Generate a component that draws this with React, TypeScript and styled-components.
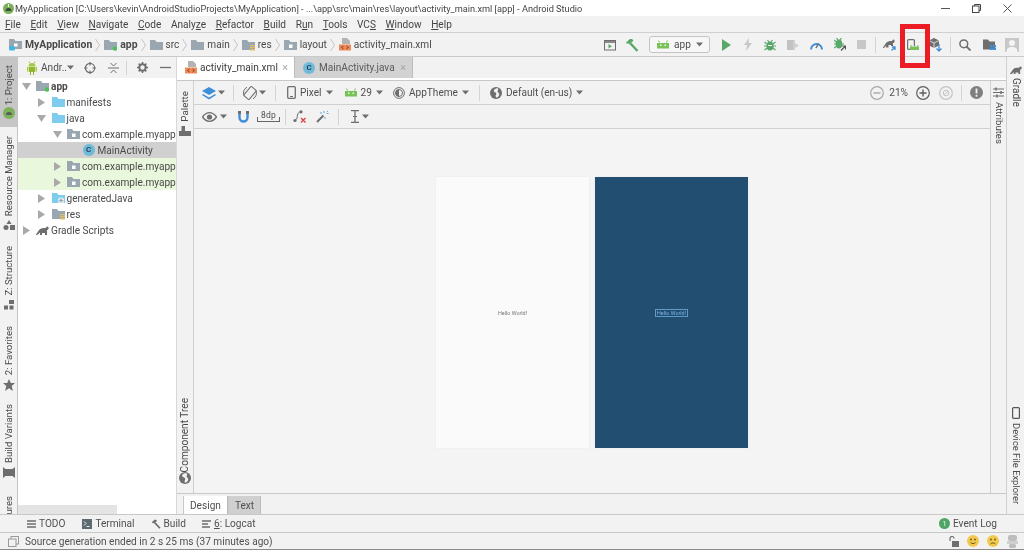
import React from "react";
import styled, { createGlobalStyle } from "styled-components";

const GlobalStyle = createGlobalStyle`
  html, body {
    margin: 0;
    padding: 0;
    background: #f2f2f2;
  }
  body {
    font-family: Roboto, "Open Sans", sans-serif;
    font-size: 10.1px;
    color: #505050;
    overflow: hidden;
  }
  * {
    box-sizing: border-box;
  }
  svg {
    display: block;
    flex: none;
  }
  u {
    text-underline-offset: 1px;
  }
`;

const Window = styled.div`
  position: relative;
  width: 1024px;
  height: 550px;
  display: flex;
  flex-direction: column;
  background: #f2f2f2;
  overflow: hidden;
  border-bottom: 1px solid #8a8a8a;
  filter: blur(0.35px);
`;

/* top of the window */
const TitleBar = styled.div`
  height: 16px;
  display: flex;
  align-items: center;
  background: #fff;
  padding-left: 3px;
  font-size: 9.2px;
  color: #444;
  white-space: nowrap;
`;

const TitleText = styled.span`
  margin-left: 1px;
`;

const WindowButtons = styled.div`
  margin-left: auto;
  display: flex;
  align-items: center;
  gap: 22px;
  padding-right: 12px;
`;

const MenuBar = styled.div`
  height: 17px;
  display: flex;
  align-items: center;
  gap: 9.6px;
  padding-left: 5px;
  border-bottom: 1px solid #d0d0d0;
  color: #444;
`;

const NavBar = styled.div`
  height: 24px;
  display: flex;
  align-items: center;
  padding-left: 9px;
  border-bottom: 1px solid #c9c9c9;
  white-space: nowrap;
`;

const Crumb = styled.div<{ $bold?: boolean }>`
  display: flex;
  align-items: center;
  gap: 3px;
  font-weight: ${(p) => (p.$bold ? 700 : 400)};
  font-size: ${(p) => (p.$bold ? "10.4px" : "inherit")};
  color: #4a4a4a;
`;

const CrumbSep = styled.div`
  width: 5px;
  height: 14px;
  margin: 0 4px 0 3px;
`;

const NavTools = styled.div`
  margin-left: auto;
  display: flex;
  align-items: center;
`;

const NavSlot = styled.div<{ $w: number }>`
  width: ${(p) => p.$w}px;
  height: 20px;
  display: flex;
  align-items: center;
  justify-content: center;
`;

const RunCombo = styled.div`
  width: 61px;
  height: 17px;
  margin: 0 5px 0 6px;
  display: flex;
  align-items: center;
  padding: 0 7px;
  gap: 5px;
  background: #f7f7f7;
  border: 1px solid #c4c4c4;
  border-radius: 3px;
`;

const VerticalLine = styled.div<{ $h?: number; $ml?: number }>`
  width: 1px;
  height: ${(p) => p.$h ?? 16}px;
  margin-left: ${(p) => p.$ml ?? 0}px;
  background: #d4d4d4;
  flex: none;
`;

/* main area */
const Body = styled.div`
  flex: 1;
  min-height: 0;
  display: flex;
`;

const SideStrip = styled.div<{ $right?: boolean }>`
  width: 18px;
  flex: none;
  display: flex;
  flex-direction: column;
  overflow: hidden;
  ${(p) => (p.$right ? "border-left: 1px solid #d0d0d0;" : "border-right: 1px solid #c4c4c4;")}
`;

const SideItem = styled.div<{ $h: number; $active?: boolean; $pad?: number; $gap?: number }>`
  height: ${(p) => p.$h}px;
  flex: none;
  display: flex;
  flex-direction: column;
  align-items: center;
  justify-content: flex-end;
  gap: ${(p) => p.$gap ?? 4}px;
  padding-bottom: ${(p) => p.$pad ?? 0}px;
  background: ${(p) => (p.$active ? "#c6c6c6" : "transparent")};
`;

const SideItemDown = styled(SideItem)`
  justify-content: flex-start;
  padding-bottom: 0;
  padding-top: ${(p) => p.$pad ?? 0}px;
`;

const VerticalUp = styled.span<{ $size?: number }>`
  writing-mode: vertical-rl;
  transform: rotate(180deg);
  font-size: ${(p) => p.$size ?? 9.6}px;
  line-height: 14px;
  color: #4a4a4a;
  white-space: nowrap;
`;

const VerticalDown = styled.span<{ $size?: number }>`
  writing-mode: vertical-rl;
  font-size: ${(p) => p.$size ?? 9.6}px;
  line-height: 14px;
  color: #4a4a4a;
  white-space: nowrap;
`;

const ProjectPanel = styled.div`
  width: 159px;
  flex: none;
  display: flex;
  flex-direction: column;
  background: #fff;
  border-right: 1px solid #d8d8d8;
`;

const PanelHeader = styled.div`
  height: 21px;
  flex: none;
  display: flex;
  align-items: center;
  padding-left: 9px;
  background: #f2f2f2;
`;

const PanelTitle = styled.span`
  margin-left: 4px;
`;

const HeaderIcon = styled.div<{ $ml: number }>`
  margin-left: ${(p) => p.$ml}px;
`;

const Tree = styled.div`
  flex: 1;
  overflow: hidden;
`;

const TreeRow = styled.div<{ $depth: number; $tone?: "selected" | "changed" }>`
  height: 16px;
  display: flex;
  align-items: center;
  gap: 2px;
  padding-left: ${(p) => 2 + p.$depth * 15.5}px;
  color: #4a4a4a;
  white-space: nowrap;
  overflow: hidden;
  background: ${(p) =>
    p.$tone === "selected" ? "#d0d0d0" : p.$tone === "changed" ? "#e9f7dc" : "transparent"};
`;

const TreeArrow = styled.div`
  width: 12px;
  display: flex;
  justify-content: center;
  margin-right: 2px;
  flex: none;
`;

const TreeLabel = styled.span<{ $bold?: boolean }>`
  font-weight: ${(p) => (p.$bold ? 700 : 400)};
`;

const ClassBadge = styled.span`
  width: 12px;
  height: 12px;
  flex: none;
  margin-right: 1px;
  border-radius: 50%;
  background: #6fbad8;
  color: #234;
  font-size: 8px;
  font-weight: 500;
  line-height: 12px;
  text-align: center;
`;

const PanelScroll = styled.div`
  height: 9px;
  width: 99px;
  flex: none;
  background: #e4e4e4;
`;

/* editor */
const Editor = styled.div`
  flex: 1;
  min-width: 0;
  display: flex;
  flex-direction: column;
`;

const EditorTabs = styled.div`
  height: 21px;
  flex: none;
  display: flex;
  border-bottom: 2px solid #fff;
  box-sizing: content-box;
`;

const EditorTab = styled.div<{ $active?: boolean }>`
  width: 118px;
  display: flex;
  align-items: center;
  gap: 3px;
  padding: 0 6px 0 8px;
  color: ${(p) => (p.$active ? "#3c3c3c" : "#5a5a5a")};
  background: ${(p) => (p.$active ? "#fff" : "#d2d2d2")};
  border-right: 1px solid #bcbcbc;
`;

const TabClose = styled.span`
  margin-left: auto;
  color: #a8a8a8;
  font-size: 11px;
`;

const EditorMain = styled.div`
  flex: 1;
  min-height: 0;
  display: flex;
  border-top: 1px solid #c8c8c8;
`;

const ToolWindowBar = styled.div`
  width: 17px;
  flex: none;
  display: flex;
  flex-direction: column;
  justify-content: space-between;
  border-right: 1px solid #d0d0d0;
`;

const AttributesBar = styled.div`
  width: 16px;
  flex: none;
  display: flex;
  flex-direction: column;
  align-items: center;
  gap: 4px;
  padding-top: 6px;
  border-left: 1px solid #d0d0d0;
`;

const DesignColumn = styled.div`
  flex: 1;
  min-width: 0;
  display: flex;
  flex-direction: column;
`;

const DesignToolbar = styled.div`
  height: 24px;
  flex: none;
  display: flex;
  align-items: center;
  border-bottom: 1px solid #d0d0d0;
  padding-right: 7px;
  white-space: nowrap;
`;

const Tool = styled.div<{ $ml?: number; $gap?: number }>`
  display: flex;
  align-items: center;
  gap: ${(p) => p.$gap ?? 2}px;
  margin-left: ${(p) => p.$ml ?? 0}px;
`;

const RightTools = styled.div`
  margin-left: auto;
  display: flex;
  align-items: center;
`;

const Canvas = styled.div`
  flex: 1;
  min-height: 0;
  display: flex;
  justify-content: center;
  align-items: center;
  gap: 6px;
  padding-top: 3px;
  background: #f4f4f4;
`;

const Phone = styled.div<{ $blueprint?: boolean }>`
  width: 153px;
  height: 271px;
  display: flex;
  align-items: center;
  justify-content: center;
  background: ${(p) => (p.$blueprint ? "#224e71" : "#fafafa")};
  box-shadow: 0 0 1px #d8d8d8;
`;

const HelloText = styled.span`
  font-size: 5.4px;
  color: #777;
`;

const HelloBlueprint = styled.span`
  font-size: 5.4px;
  line-height: 6px;
  padding: 0 1px;
  color: #7eb2de;
  border: 1px solid #5e99c9;
`;

const DesignTabs = styled.div`
  height: 21px;
  flex: none;
  display: flex;
  align-items: flex-end;
  padding-left: 6px;
  border-top: 1px solid #c8c8c8;
`;

const DesignTab = styled.div<{ $active?: boolean }>`
  height: 18px;
  padding: 0 6px;
  display: flex;
  align-items: center;
  background: ${(p) => (p.$active ? "#fff" : "#d0d0d0")};
  border-left: 1px solid #c8c8c8;
  border-right: 1px solid #bcbcbc;
`;

/* bottom of the window */
const BottomBar = styled.div`
  height: 17px;
  flex: none;
  display: flex;
  align-items: center;
  padding-left: 27px;
  border-top: 1px solid #c8c8c8;
  border-bottom: 1px solid #c8c8c8;
  box-sizing: content-box;
  white-space: nowrap;
`;

const BottomItem = styled.div<{ $ml?: number }>`
  display: flex;
  align-items: center;
  gap: 3px;
  margin-left: ${(p) => p.$ml ?? 0}px;
`;

const EventLog = styled.div`
  margin-left: auto;
  margin-right: 27px;
  display: flex;
  align-items: center;
  gap: 3px;
`;

const EventBadge = styled.span`
  width: 11px;
  height: 11px;
  border-radius: 50%;
  background: #4fa566;
  color: #dff2e3;
  font-size: 8px;
  line-height: 11px;
  text-align: center;
`;

const StatusBar = styled.div`
  height: 16px;
  flex: none;
  display: flex;
  align-items: center;
  padding-left: 8px;
  white-space: nowrap;
`;

const StatusText = styled.span`
  margin-left: 6px;
`;

const StatusIcons = styled.div`
  margin-left: auto;
  padding-right: 6px;
  display: flex;
  align-items: center;
  gap: 8px;
`;

const RedMark = styled.div`
  position: absolute;
  left: 900px;
  top: 24px;
  width: 30px;
  height: 44px;
  border: 5px solid #ec1c24;
`;

const DpBracket = styled.div`
  width: 23px;
  height: 11px;
  font-size: 8.5px;
  line-height: 9px;
  letter-spacing: 0.3px;
  text-align: center;
  border-bottom: 1px solid #666;
  border-left: 1px solid #666;
  border-right: 1px solid #666;
  border-image: linear-gradient(to bottom, transparent 60%, #666 60%) 1;
`;

/* icons */
const GRAY = "#6e6e6e";
const GREEN = "#59a869";
const ANDROID = "#78c257";

const Svg = ({ w, h, children }: { w: number; h: number; children: React.ReactNode }) => (
  <svg width={w} height={h} viewBox={`0 0 ${w} ${h}`} fill="none">
    {children}
  </svg>
);

const Caret = () => (
  <Svg w={7} h={5}>
    <path d="M0 .5h7L3.500 4.500z" fill={GRAY} />
  </Svg>
);

const TreeDown = () => (
  <Svg w={9} h={7}>
    <path d="M0 0h9L4.500 7z" fill="#a9a9a9" />
  </Svg>
);

const TreeRight = () => (
  <Svg w={7} h={9}>
    <path d="M0 0v9l7-4.500z" fill="#a9a9a9" />
  </Svg>
);

const Chevron = () => (
  <Svg w={5} h={14}>
    <path d="M.5 1l4 6-4 6" stroke="#c4c4c4" />
  </Svg>
);

const Folder = ({ color = "#9aa7b0", dot }: { color?: string; dot?: string }) => (
  <Svg w={13} h={12}>
    <path d="M0 1h5l1.500 2H13v8H0z" fill={color} />
    {dot && <circle cx={11} cy={9.5} r={2.3} fill={dot} />}
  </Svg>
);

const PackageFolder = () => (
  <Svg w={13} h={12}>
    <path d="M0 1h5l1.500 2H13v8H0z" fill="#9aa7b0" />
    <rect x="5" y="5.500" width="3.500" height="3.500" fill="#fff" />
  </Svg>
);

const ResFolder = () => (
  <Svg w={13} h={12}>
    <path d="M0 1h5l1.500 2H13v8H0z" fill="#9aa7b0" />
    <path d="M8 6h5v1.300H8zM8 8h5v1.300H8zM8 10h5v1.600H8z" fill="#e4bc63" />
  </Svg>
);

const GeneratedFolder = () => (
  <Svg w={13} h={12}>
    <path d="M0 1h5l1.500 2H13v8H0z" fill="#7fcdee" />
    <circle cx="9" cy="8.500" r="3" fill="#fff" />
    <path d="M9 6v5M6.500 8.500h5M7.200 6.700l3.600 3.600M10.800 6.700l-3.600 3.600" stroke="#8aa0b0" strokeWidth=".8" />
  </Svg>
);

const ModuleFolder = () => (
  <Svg w={13} h={13}>
    <path d="M0 1h5l1.500 2H13v8H0z" fill="#9aa7b0" />
    <rect y="8" width="6" height="4.500" rx="1.500" fill="#40b6e0" />
    <rect x="5" y="5.500" width="3.500" height="3" fill="#fff" />
  </Svg>
);

const XmlFile = () => (
  <Svg w={12} h={13}>
    <path d="M3 0h5l3 3v3H3z" fill="#b3b3b3" />
    <rect y="6.500" width="12" height="6" fill="#ee8a5a" />
    <path d="M4.500 8l-2 1.500 2 1.500M7.500 8l2 1.500-2 1.500" stroke="#7a3a1a" strokeWidth=".9" />
  </Svg>
);

const AndroidHead = ({ color = ANDROID }: { color?: string }) => (
  <Svg w={12} h={9}>
    <path d="M2.500 2.500L1.500 .5M9.500 2.500l1-2" stroke={color} />
    <path d="M0 3h12v5.500H0z" fill={color} />
    <rect x="3" y="4.500" width="1.500" height="1.500" fill="#f2f2f2" />
    <rect x="7.500" y="4.500" width="1.500" height="1.500" fill="#f2f2f2" />
  </Svg>
);

const AndroidBody = () => (
  <Svg w={10} h={14}>
    <path d="M1.500 5.500a3.500 3.500 0 0 1 7 0z" fill="#a4c93c" />
    <path d="M3 2.500L2 .5M7 2.500l1-2" stroke="#a4c93c" />
    <path d="M2 6h6v5H7v3H6v-3H4v3H3v-3H2z" fill="#8fb82e" />
    <rect y="6" width="1.400" height="4.500" fill="#a4c93c" />
    <rect x="8.600" y="6" width="1.400" height="4.500" fill="#a4c93c" />
  </Svg>
);

const Hammer = ({ color = GREEN, size = 14 }: { color?: string; size?: number }) => (
  <svg width={size} height={size} viewBox="0 0 14 14" fill="none">
    <path d="M1 4.500L5 1h2l1.500 1.500L6 5 4.500 6.500 3 5 2 6z" fill={color} />
    <path d="M5.500 5.500L12.500 13" stroke={color} strokeWidth="2.400" />
  </svg>
);

const Target = () => (
  <Svg w={12} h={12}>
    <circle cx="6" cy="6" r="4.600" stroke={GRAY} strokeWidth="1.200" />
    <path d="M6 0v3.500M6 8.500V12M0 6h3.500M8.500 6H12" stroke={GRAY} strokeWidth="1.200" />
  </Svg>
);

const Collapse = () => (
  <Svg w={11} h={12}>
    <path d="M0 6h11" stroke={GRAY} />
    <path d="M2.500 1l3 3 3-3M2.500 11l3-3 3 3" stroke={GRAY} />
  </Svg>
);

const Gear = () => (
  <Svg w={11} h={11}>
    <circle cx="5.500" cy="5.500" r="3.200" stroke={GRAY} strokeWidth="2" />
    <path d="M5.500 0v2M5.500 9v2M0 5.500h2M9 5.500h2M1.600 1.600L3 3M8 8l1.400 1.400M1.600 9.400L3 8M8 3l1.400-1.400" stroke={GRAY} strokeWidth="1.500" />
  </Svg>
);

const Minus = () => (
  <Svg w={11} h={3}>
    <path d="M0 1.500h11" stroke={GRAY} strokeWidth="1.300" />
  </Svg>
);

const Layers = () => (
  <Svg w={14} h={14}>
    <path d="M7 1l7 4-7 4-7-4z" fill="#3f8ed8" />
    <path d="M1 8l6 3.500L13 8l1 1-7 4.500L0 9z" fill="#3f8ed8" />
  </Svg>
);

const Rotate = () => (
  <Svg w={14} h={14}>
    <rect x="3.500" y="1" width="7" height="12" rx="1" transform="rotate(40 7 7)" stroke={GRAY} />
    <path d="M1 9.500A6.500 6.500 0 0 1 4 1.200M13 4.500A6.500 6.500 0 0 1 10 12.800" stroke={GRAY} />
  </Svg>
);

const PhoneIcon = () => (
  <Svg w={9} h={13}>
    <rect x=".7" y=".7" width="7.600" height="11.600" rx="1" stroke={GRAY} strokeWidth="1.300" />
    <path d="M3 10.500h3" stroke={GRAY} />
  </Svg>
);

const ThemeIcon = () => (
  <Svg w={12} h={12}>
    <circle cx="6" cy="6" r="5.400" stroke={GRAY} />
    <path d="M6 2.500a3.500 3.500 0 1 0 0 7z" fill={GRAY} />
    <circle cx="6" cy="6" r="3.500" stroke={GRAY} />
  </Svg>
);

const Globe = () => (
  <Svg w={12} h={12}>
    <circle cx="6" cy="6" r="6" fill={GRAY} />
    <path d="M6 1.500c-2 1-3 2.500-1.500 3.500S7 6 6 7.500 6 11 7 10.500 10 8 9 6.500 7 5 8 3 7 1 6 1.500z" fill="#f2f2f2" />
  </Svg>
);

const ZoomCircle = ({ color, plus }: { color: string; plus?: boolean }) => (
  <Svg w={14} h={14}>
    <circle cx="7" cy="7" r="6.300" stroke={color} strokeWidth="1.200" />
    <path d={plus ? "M3.500 7h7M7 3.500v7" : "M3.500 7h7"} stroke={color} strokeWidth="1.400" />
  </Svg>
);

const ZoomFit = () => (
  <Svg w={14} h={14}>
    <circle cx="7" cy="7" r="6.300" stroke="#c4c4c4" strokeWidth="1.200" />
    <circle cx="7" cy="7" r="2.800" stroke="#c4c4c4" />
    <path d="M5 9l4-4" stroke="#c4c4c4" />
  </Svg>
);

const Warning = () => (
  <Svg w={13} h={13}>
    <circle cx="6.500" cy="6.500" r="6.500" fill="#7f7f7f" />
    <path d="M6.500 2.500v5" stroke="#f2f2f2" strokeWidth="1.800" />
    <circle cx="6.500" cy="9.700" r="1" fill="#f2f2f2" />
  </Svg>
);

const Eye = () => (
  <Svg w={15} h={10}>
    <path d="M.5 5C3 1.500 5 .7 7.500.7S12 1.500 14.500 5C12 8.500 10 9.300 7.500 9.300S3 8.500.5 5z" stroke={GRAY} strokeWidth="1.300" />
    <circle cx="7.500" cy="5" r="2.600" fill={GRAY} />
  </Svg>
);

const Magnet = () => (
  <Svg w={11} h={12}>
    <path d="M1.500 0v6.500a4 4 0 0 0 8 0V0" stroke="#3f8ed8" strokeWidth="2.400" />
    <path d="M0 0h3v3H0zM8 0h3v3H8z" fill={GRAY} />
  </Svg>
);

const ClearPath = () => (
  <Svg w={13} h={13}>
    <circle cx="2" cy="10.500" r="1.600" fill={GRAY} />
    <circle cx="8" cy="1.800" r="1.600" fill={GRAY} />
    <path d="M2.500 10c2-1 1.500-3 2-5s1.500-3 3.500-3.300" stroke={GRAY} />
    <path d="M8 8l4.500 4.500M12.500 8L8 12.500" stroke="#d9464a" strokeWidth="1.400" />
  </Svg>
);

const Wand = () => (
  <Svg w={13} h={13}>
    <path d="M1 12l6.500-6.500" stroke={GRAY} strokeWidth="2" />
    <path d="M8 1v2M10.500 3.500h2M12 1l-1 1M9 7v2M4 3h2" stroke="#59a8e0" />
  </Svg>
);

const TextCursor = () => (
  <Svg w={8} h={13}>
    <path d="M0 .7h8M0 12.300h8M4 .7v11.600" stroke={GRAY} strokeWidth="1.300" />
    <path d="M2 6.500h4" stroke={GRAY} />
  </Svg>
);

const ElephantIcon = ({ color = GRAY, w = 13 }: { color?: string; w?: number }) => (
  <svg width={w} height={(w * 10) / 13} viewBox="0 0 13 10" fill="none">
    <path d="M0 9c1 0 2-3 3.500-4.500S7 3 9 3c1 0 1.500-1.500 2.500-1.500S13 3 12.500 4 11.500 5 11 5v5H9V8H6v2H4V7.500C3 8.500 2 10 0 10z" fill={color} />
  </svg>
);

const LayoutIcon = () => (
  <Svg w={12} h={12}>
    <rect x=".5" y="1.500" width="11" height="9.500" stroke={GRAY} />
    <path d="M0 3h12" stroke={GRAY} strokeWidth="1.600" />
    <path d="M4.500 5v4.500L8 7.200z" fill={GREEN} />
  </Svg>
);

const RunIcon = () => (
  <Svg w={10} h={12}>
    <path d="M1 0l9 6-9 6z" fill={GREEN} />
  </Svg>
);

const Lightning = () => (
  <Svg w={8} h={13}>
    <path d="M5 0L0 7h3l-1 6 6-8H4.500z" fill="#c8c8c8" />
  </Svg>
);

const BugIcon = () => (
  <Svg w={12} h={12}>
    <ellipse cx="6" cy="7" rx="3.500" ry="4.500" fill={GREEN} />
    <path d="M3.500 1L5 3M8.500 1L7 3M0 7h12M.5 3L3 5M11.500 3L9 5M.5 11L3 9M11.500 11L9 9" stroke={GREEN} strokeWidth="1.200" />
    <path d="M4 6.500h4" stroke="#f2f2f2" />
  </Svg>
);

const CoverageIcon = () => (
  <Svg w={13} h={12}>
    <path d="M1 1h6v10H1z" fill="#c2c2c2" />
    <path d="M7 1h2v3l4 2.500L9 9v2H7z" fill="#d0d0d0" />
  </Svg>
);

const ProfileIcon = () => (
  <Svg w={13} h={10}>
    <path d="M1 9.500a5.500 5.500 0 0 1 11 0" stroke="#3f8ed8" strokeWidth="2" />
    <path d="M6 8l2.500-4.500" stroke={GRAY} strokeWidth="1.500" />
  </Svg>
);

const AttachIcon = () => (
  <Svg w={12} h={13}>
    <ellipse cx="5" cy="6" rx="3.300" ry="4.500" fill={GREEN} />
    <path d="M2.500 0L4 2M7.500 0L6 2M0 6h10M0 2l2 2M0 10l2-1.500" stroke={GREEN} strokeWidth="1.200" />
    <path d="M7 12.500l4-4M8 8h3.500v3.500" stroke="#555" strokeWidth="1.200" />
  </Svg>
);

const StopIcon = () => (
  <Svg w={9} h={9}>
    <rect width="9" height="9" fill="#c8c8c8" />
  </Svg>
);

const GradleSync = () => (
  <Svg w={13} h={13}>
    <path d="M0 9c1 0 2-3 3.500-4.500S7 3 8.500 3c1 0 1-1.500 2-1.500S12 3 11.500 4 10 5 10 5v3H8V7H5.500v2.500H3V7.500C2.500 8.500 1.500 10 0 10z" fill={GRAY} />
    <path d="M8.500 12.500L12 9M9 9h3v3" stroke="#3f8ed8" strokeWidth="1.300" />
  </Svg>
);

const AvdManager = () => (
  <Svg w={12} h={11}>
    <rect x=".6" y=".6" width="6.800" height="9.800" rx="1" stroke={GRAY} strokeWidth="1.200" />
    <path d="M3 7h9v4H3z" fill="#f2f2f2" />
    <path d="M3 7.500h9V11H3z" fill={ANDROID} />
    <path d="M4.500 7.500L4 6M10.500 7.500L11 6" stroke={ANDROID} />
  </Svg>
);

const SdkManager = () => (
  <Svg w={13} h={14}>
    <path d="M5 0l5 2.500v5L5 10 0 7.500v-5z" fill={GRAY} />
    <path d="M0 2.500L5 5l5-2.500M5 5v5" stroke="#f2f2f2" strokeWidth=".8" />
    <path d="M10 6v7M7.500 10.500L10 13l2.500-2.500" stroke="#3f8ed8" strokeWidth="1.300" />
  </Svg>
);

const Search = () => (
  <Svg w={12} h={12}>
    <circle cx="4.800" cy="4.800" r="3.900" stroke={GRAY} strokeWidth="1.500" />
    <path d="M7.500 7.500l4 4" stroke={GRAY} strokeWidth="1.800" />
  </Svg>
);

const ProjectStructure = () => (
  <Svg w={13} h={11}>
    <path d="M0 .5h5l1.500 2H12v8H0z" fill={GRAY} />
    <path d="M7 6h2.500v2H7zM10 6h3v2h-3zM7 8.500h2.500V11H7zM10 8.500h3V11h-3z" fill="#3f8ed8" />
  </Svg>
);

const UserIcon = () => (
  <Svg w={14} h={14}>
    <rect width="14" height="14" fill="#c8c8c8" />
    <circle cx="7" cy="5" r="3" fill="#f4f4f4" />
    <path d="M1.500 14c0-4 2.500-5 5.500-5s5.500 1 5.500 5z" fill="#f4f4f4" />
  </Svg>
);

const Sliders = () => (
  <Svg w={11} h={11}>
    <path d="M0 2h11M0 5.500h11M0 9h11" stroke={GRAY} />
    <path d="M3 .5v3M8 4v3M4 7.500v3" stroke={GRAY} strokeWidth="1.500" />
  </Svg>
);

const PaletteIcon = () => (
  <Svg w={12} h={10}>
    <path d="M0 10V5h2.500V0H6v5h6v5z" fill={GRAY} />
  </Svg>
);

const TreeGlobe = () => (
  <Svg w={12} h={12}>
    <circle cx="6" cy="6" r="6" fill={GRAY} />
    <path d="M5 1.500c-2 1-2.500 2.500-1 3.500S7 6 6 8s0 3 1 2.500S10 8 9 6.500 7 5 8 3 6 1 5 1.500z" fill="#f2f2f2" />
  </Svg>
);

const ResourceIcon = () => (
  <Svg w={12} h={10}>
    <path d="M6 0l2.500 4h-5z" fill={GRAY} />
    <circle cx="3" cy="7.500" r="2.500" fill={GRAY} />
    <rect x="7" y="5" width="5" height="5" fill={GRAY} />
  </Svg>
);

const StructureIcon = () => (
  <Svg w={10} h={10}>
    <rect x="5" y="0" width="5" height="4" fill={GRAY} />
    <rect x="0" y="5.500" width="4" height="4" fill={GRAY} />
    <rect x="5.500" y="5.500" width="4" height="4" fill={GRAY} />
  </Svg>
);

const Star = () => (
  <Svg w={12} h={12}>
    <path d="M6 0l1.800 4H12L8.700 7l1.200 5L6 9.300 2.100 12l1.200-5L0 4h4.200z" fill={GRAY} />
  </Svg>
);

const BuildVariantIcon = () => (
  <Svg w={12} h={11}>
    <path d="M0 0l2.500 2h7L12 0v11L9.500 9h-7L0 11z" fill={GRAY} />
  </Svg>
);

const ListIcon = () => (
  <Svg w={9} h={8}>
    <path d="M0 1h9M0 4h9M0 7h9" stroke={GRAY} strokeWidth="1.300" />
  </Svg>
);

const TerminalIcon = () => (
  <Svg w={10} h={10}>
    <rect width="10" height="10" fill="#5e6a72" />
    <path d="M2 2.500l2 2-2 2M4.500 7.500h3" stroke="#fff" strokeWidth=".9" />
  </Svg>
);

const LogcatIcon = () => (
  <Svg w={9} h={8}>
    <path d="M0 1h9M0 4h6M0 7h8" stroke={GRAY} strokeWidth="1.300" />
  </Svg>
);

const CopyIcon = () => (
  <Svg w={11} h={11}>
    <rect x="3" y=".5" width="7.500" height="7.500" stroke="#9a9a9a" />
    <rect x=".5" y="3" width="7.500" height="7.500" fill="#f2f2f2" stroke="#9a9a9a" />
  </Svg>
);

const LockOpen = () => (
  <Svg w={10} h={11}>
    <path d="M1 5V2.500a2 2 0 0 1 4 0" stroke={GRAY} strokeWidth="1.200" />
    <rect x="3" y="5" width="7" height="6" fill={GRAY} />
  </Svg>
);

const Smiley = ({ sad }: { sad?: boolean }) => (
  <Svg w={12} h={12}>
    <circle cx="6" cy="6" r="6" fill="#f2c94c" />
    <circle cx="4" cy="4.500" r=".9" fill="#6b5a1e" />
    <circle cx="8" cy="4.500" r=".9" fill="#6b5a1e" />
    <path d={sad ? "M3.500 9c1.500-1.500 3.500-1.500 5 0" : "M3.500 7.500c1.500 1.500 3.500 1.500 5 0"} stroke="#6b5a1e" />
  </Svg>
);

const BotIcon = () => (
  <Svg w={11} h={13}>
    <rect x="1" y="0" width="9" height="6" rx="2" fill="#bdbdbd" />
    <rect x="0" y="6" width="11" height="3" fill="#cfcfcf" />
    <rect x="2" y="9" width="7" height="4" rx="1.500" fill="#bdbdbd" />
  </Svg>
);

const DeviceIcon = () => (
  <Svg w={8} h={12}>
    <rect x=".6" y=".6" width="6.800" height="10.800" rx="1" stroke="#555" strokeWidth="1.200" />
  </Svg>
);

const AndroidStudioLogo = () => (
  <Svg w={11} h={11}>
    <circle cx="5.500" cy="5.500" r="5.500" fill="#7cb15a" />
    <path d="M2.500 8a3 3 0 0 1 6 0z" fill="#3c4a3c" />
    <path d="M5.500 1v3" stroke="#fff" />
  </Svg>
);

const menus: [string, string, string][] = [
  ["", "F", "ile"],
  ["", "E", "dit"],
  ["", "V", "iew"],
  ["", "N", "avigate"],
  ["", "C", "ode"],
  ["Analy", "z", "e"],
  ["", "R", "efactor"],
  ["", "B", "uild"],
  ["R", "u", "n"],
  ["", "T", "ools"],
  ["VC", "S", ""],
  ["", "W", "indow"],
  ["", "H", "elp"],
];

export default function App() {
  return (
    <Window>
      <GlobalStyle />
      <TitleBar>
        <AndroidStudioLogo />
        <TitleText>
          MyApplication [C:\Users\kevin\AndroidStudioProjects\MyApplication] - ...\app\src\main\res\layout\activity_main.xml [app] - Android Studio
        </TitleText>
        <WindowButtons>
          <Svg w={9} h={9}>
            <path d="M0 4.500h9" stroke="#555" />
          </Svg>
          <Svg w={9} h={9}>
            <rect x=".5" y="2" width="6.500" height="6.500" stroke="#444" />
            <path d="M2.500 2V.5h6v6H7" stroke="#444" />
          </Svg>
          <Svg w={9} h={9}>
            <path d="M.5.5l8 8M8.500.5l-8 8" stroke="#555" />
          </Svg>
        </WindowButtons>
      </TitleBar>

      <MenuBar>
        {menus.map(([before, key, after]) => (
          <span key={before + key + after}>
            {before}
            <u>{key}</u>
            {after}
          </span>
        ))}
      </MenuBar>

      <NavBar>
        <Crumb $bold>
          <ModuleFolder />
          MyApplication
        </Crumb>
        <CrumbSep><Chevron /></CrumbSep>
        <Crumb $bold>
          <Folder dot="#4fbf5a" />
          app
        </Crumb>
        <CrumbSep><Chevron /></CrumbSep>
        <Crumb>
          <Folder />
          src
        </Crumb>
        <CrumbSep><Chevron /></CrumbSep>
        <Crumb>
          <Folder />
          main
        </Crumb>
        <CrumbSep><Chevron /></CrumbSep>
        <Crumb>
          <ResFolder />
          res
        </Crumb>
        <CrumbSep><Chevron /></CrumbSep>
        <Crumb>
          <PackageFolder />
          layout
        </Crumb>
        <CrumbSep><Chevron /></CrumbSep>
        <Crumb>
          <XmlFile />
          activity_main.xml
        </Crumb>
        <NavTools>
          <NavSlot $w={22}><LayoutIcon /></NavSlot>
          <NavSlot $w={22}><Hammer /></NavSlot>
          <RunCombo>
            <AndroidHead />
            app
            <Caret />
          </RunCombo>
          <NavSlot $w={22}><RunIcon /></NavSlot>
          <NavSlot $w={22}><Lightning /></NavSlot>
          <NavSlot $w={22}><BugIcon /></NavSlot>
          <NavSlot $w={23}><CoverageIcon /></NavSlot>
          <NavSlot $w={24}><ProfileIcon /></NavSlot>
          <NavSlot $w={23}><AttachIcon /></NavSlot>
          <NavSlot $w={20}><StopIcon /></NavSlot>
          <VerticalLine $ml={4} />
          <NavSlot $w={26}><GradleSync /></NavSlot>
          <NavSlot $w={22}><AvdManager /></NavSlot>
          <NavSlot $w={23}><SdkManager /></NavSlot>
          <VerticalLine $ml={3} />
          <NavSlot $w={28}><Search /></NavSlot>
          <NavSlot $w={20}><ProjectStructure /></NavSlot>
          <NavSlot $w={25}><UserIcon /></NavSlot>
        </NavTools>
      </NavBar>

      <Body>
        <SideStrip>
          <SideItem $h={70} $active $pad={8} $gap={2}>
            <VerticalUp>1: Project</VerticalUp>
            <Svg w={12} h={12}>
              <circle cx="6" cy="6" r="6" fill="#7cb15a" />
              <path d="M3 8a3 3 0 0 1 6 0z" fill="#5b5b5b" />
            </Svg>
          </SideItem>
          <SideItem $h={105} $pad={2}>
            <VerticalUp>Resource Manager</VerticalUp>
            <ResourceIcon />
          </SideItem>
          <SideItem $h={80} $pad={2}>
            <VerticalUp>Z: Structure</VerticalUp>
            <StructureIcon />
          </SideItem>
          <SideItem $h={81} $pad={2}>
            <VerticalUp>2: Favorites</VerticalUp>
            <Star />
          </SideItem>
          <SideItem $h={87} $pad={2}>
            <VerticalUp>Build Variants</VerticalUp>
            <BuildVariantIcon />
          </SideItem>
          <SideItemDown $h={34} $pad={16}>
            <VerticalUp>ures</VerticalUp>
          </SideItemDown>
        </SideStrip>

        <ProjectPanel>
          <PanelHeader>
            <AndroidBody />
            <PanelTitle>Andr..</PanelTitle>
            <Caret />
            <HeaderIcon $ml={10}><Target /></HeaderIcon>
            <HeaderIcon $ml={12}><Collapse /></HeaderIcon>
            <VerticalLine $ml={7} $h={14} />
            <HeaderIcon $ml={10}><Gear /></HeaderIcon>
            <HeaderIcon $ml={12}><Minus /></HeaderIcon>
          </PanelHeader>
          <Tree>
            <TreeRow $depth={0}>
              <TreeArrow><TreeDown /></TreeArrow>
              <Folder dot="#4fbf5a" />
              <TreeLabel $bold>app</TreeLabel>
            </TreeRow>
            <TreeRow $depth={1}>
              <TreeArrow><TreeRight /></TreeArrow>
              <Folder color="#7fcdee" />
              <TreeLabel>manifests</TreeLabel>
            </TreeRow>
            <TreeRow $depth={1}>
              <TreeArrow><TreeDown /></TreeArrow>
              <Folder color="#7fcdee" />
              <TreeLabel>java</TreeLabel>
            </TreeRow>
            <TreeRow $depth={2}>
              <TreeArrow><TreeDown /></TreeArrow>
              <PackageFolder />
              <TreeLabel>com.example.myapplication</TreeLabel>
            </TreeRow>
            <TreeRow $depth={3} $tone="selected">
              <TreeArrow />
              <ClassBadge>C</ClassBadge>
              <TreeLabel>MainActivity</TreeLabel>
            </TreeRow>
            <TreeRow $depth={2} $tone="changed">
              <TreeArrow><TreeRight /></TreeArrow>
              <PackageFolder />
              <TreeLabel>com.example.myapplication</TreeLabel>
            </TreeRow>
            <TreeRow $depth={2} $tone="changed">
              <TreeArrow><TreeRight /></TreeArrow>
              <PackageFolder />
              <TreeLabel>com.example.myapplication</TreeLabel>
            </TreeRow>
            <TreeRow $depth={1}>
              <TreeArrow><TreeRight /></TreeArrow>
              <GeneratedFolder />
              <TreeLabel>generatedJava</TreeLabel>
            </TreeRow>
            <TreeRow $depth={1}>
              <TreeArrow><TreeRight /></TreeArrow>
              <ResFolder />
              <TreeLabel>res</TreeLabel>
            </TreeRow>
            <TreeRow $depth={0}>
              <TreeArrow><TreeRight /></TreeArrow>
              <ElephantIcon />
              <TreeLabel>Gradle Scripts</TreeLabel>
            </TreeRow>
          </Tree>
          <PanelScroll />
        </ProjectPanel>

        <Editor>
          <EditorTabs>
            <EditorTab $active>
              <XmlFile />
              activity_main.xml
              <TabClose>×</TabClose>
            </EditorTab>
            <EditorTab>
              <ClassBadge>C</ClassBadge>
              MainActivity.java
              <TabClose>×</TabClose>
            </EditorTab>
          </EditorTabs>
          <EditorMain>
            <ToolWindowBar>
              <SideItemDown $h={60} $pad={10}>
                <VerticalUp $size={9.8}>Palette</VerticalUp>
                <PaletteIcon />
              </SideItemDown>
              <SideItem $h={100} $pad={9} $gap={0}>
                <VerticalUp $size={10.1}>Component Tree</VerticalUp>
                <TreeGlobe />
              </SideItem>
            </ToolWindowBar>
            <DesignColumn>
              <DesignToolbar>
                <Tool $ml={8}><Layers /><Caret /></Tool>
                <VerticalLine $ml={8} />
                <Tool $ml={9}><Rotate /><Caret /></Tool>
                <VerticalLine $ml={9} />
                <Tool $ml={11} $gap={4}><PhoneIcon />Pixel<Caret /></Tool>
                <Tool $ml={12} $gap={4}><AndroidHead />29<Caret /></Tool>
                <Tool $ml={10} $gap={4}><ThemeIcon />AppTheme<Caret /></Tool>
                <VerticalLine $ml={10} />
                <Tool $ml={10} $gap={4}><Globe />Default (en-us)<Caret /></Tool>
                <RightTools>
                  <ZoomCircle color="#a8a8a8" />
                  <Tool $ml={5}>21%</Tool>
                  <Tool $ml={8}><ZoomCircle color="#5e5e5e" plus /></Tool>
                  <Tool $ml={9}><ZoomFit /></Tool>
                  <VerticalLine $ml={8} />
                  <Tool $ml={8}><Warning /></Tool>
                </RightTools>
              </DesignToolbar>
              <DesignToolbar>
                <Tool $ml={8} $gap={3}><Eye /><Caret /></Tool>
                <Tool $ml={11}><Magnet /></Tool>
                <Tool $ml={8}><DpBracket>8dp</DpBracket></Tool>
                <VerticalLine $ml={5} />
                <Tool $ml={7}><ClearPath /></Tool>
                <Tool $ml={10}><Wand /></Tool>
                <VerticalLine $ml={9} />
                <Tool $ml={12} $gap={3}><TextCursor /><Caret /></Tool>
              </DesignToolbar>
              <Canvas>
                <Phone>
                  <HelloText>Hello World!</HelloText>
                </Phone>
                <Phone $blueprint>
                  <HelloBlueprint>Hello World!</HelloBlueprint>
                </Phone>
              </Canvas>
            </DesignColumn>
            <AttributesBar>
              <Sliders />
              <VerticalDown>Attributes</VerticalDown>
            </AttributesBar>
          </EditorMain>
          <DesignTabs>
            <DesignTab $active>Design</DesignTab>
            <DesignTab>Text</DesignTab>
          </DesignTabs>
        </Editor>

        <SideStrip $right>
          <SideItemDown $h={350} $pad={8}>
            <ElephantIcon w={12} />
            <VerticalDown $size={10}>Gradle</VerticalDown>
          </SideItemDown>
          <SideItemDown $h={104} $pad={0}>
            <DeviceIcon />
            <VerticalDown $size={9.4}>Device File Explorer</VerticalDown>
          </SideItemDown>
        </SideStrip>
      </Body>

      <BottomBar>
        <BottomItem><ListIcon />TODO</BottomItem>
        <BottomItem $ml={17}><TerminalIcon />Terminal</BottomItem>
        <BottomItem $ml={16}><Hammer color={GRAY} size={10} />Build</BottomItem>
        <BottomItem $ml={16}>
          <LogcatIcon />
          <span><u>6</u>: Logcat</span>
        </BottomItem>
        <EventLog>
          <EventBadge>1</EventBadge>
          Event Log
        </EventLog>
      </BottomBar>

      <StatusBar>
        <CopyIcon />
        <StatusText>Source generation ended in 2 s 25 ms (37 minutes ago)</StatusText>
        <StatusIcons>
          <LockOpen />
          <Smiley />
          <Smiley sad />
          <BotIcon />
        </StatusIcons>
      </StatusBar>

      <RedMark />
    </Window>
  );
}
